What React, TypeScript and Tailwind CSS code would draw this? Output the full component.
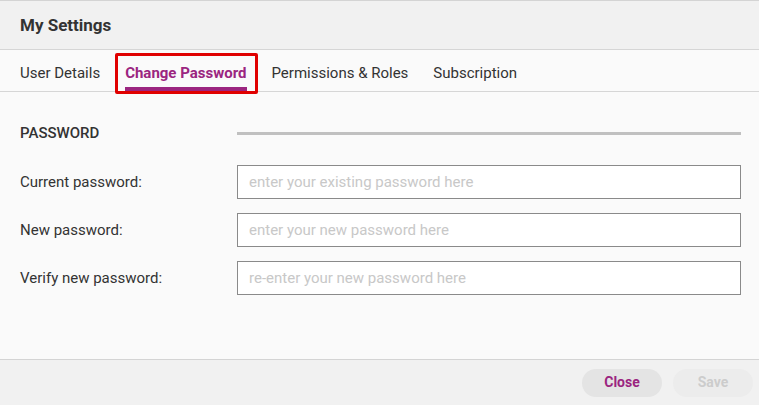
import React from "react";

const tabs = ["User Details", "Change Password", "Permissions & Roles", "Subscription"];

const fields = [
    { label: "Current password:", placeholder: "enter your existing password here" },
    { label: "New password:", placeholder: "enter your new password here" },
    { label: "Verify new password:", placeholder: "re-enter your new password here" },
];

export default function App() {
    return (
        <div className="w-[759px] h-[405px] flex flex-col bg-[#fafafa] text-[#333] border-t border-[#d4d4d4] font-['Roboto',sans-serif] overflow-hidden">
            <div className="h-[49px] shrink-0 bg-[#f1f1f1] border-b border-[#d6d6d6] flex items-center px-5 pt-[1px]">
                <h1 className="text-[17px] font-bold text-[#333]">My Settings</h1>
            </div>

            <div className="h-[42px] shrink-0 border-b border-[#d6d6d6] flex items-end px-5 gap-[25px]">
                {tabs.map((tab) => {
                    const active = tab === "Change Password";
                    return (
                        <div key={tab} className="relative h-full flex items-center pt-[6px]">
                            <span className={active ? "text-[15px] font-bold text-[#9b2580]" : "text-[15px] text-[#333]"}>
                                {tab}
                            </span>
                            {active && (
                                <>
                                    <div className="absolute left-0 right-0 bottom-0 h-[4px] bg-[#9b2580]" />
                                    <div className="absolute left-[-10px] right-[-11px] top-[3px] bottom-[-3px] border-[3px] border-[#e00000] rounded-[2px]" />
                                </>
                            )}
                        </div>
                    );
                })}
            </div>

            <div className="flex-1 pl-5 pr-[18px] pt-[30px]">
                <div className="flex items-center h-[22px]">
                    <div className="w-[217px] shrink-0 text-[15px] font-medium text-[#333]">PASSWORD</div>
                    <div className="w-[504px] shrink-0 h-[3px] bg-[#c0c0c0]" />
                </div>
                <div className="flex flex-col gap-[14px] mt-[21px]">
                    {fields.map((f) => (
                        <div key={f.label} className="flex items-center">
                            <label className="w-[217px] shrink-0 text-[15px] text-[#333]">{f.label}</label>
                            <input
                                type="password"
                                placeholder={f.placeholder}
                                className="w-[504px] shrink-0 h-[34px] border border-[#8a8a8a] bg-white px-[11px] text-[15px] placeholder:text-[#c8c8c8] outline-none"
                            />
                        </div>
                    ))}
                </div>
            </div>

            <div className="h-[46px] shrink-0 bg-[#f1f1f1] border-t border-[#d4d4d4] flex items-center justify-end gap-[11px] pr-[6px]">
                <button className="w-[80px] h-[28px] rounded-full bg-[#e4e4e4] text-[14px] font-bold text-[#9b2580]">Close</button>
                <button className="w-[80px] h-[28px] rounded-full bg-[#ececec] text-[14px] font-bold text-[#cccccc]">Save</button>
            </div>
        </div>
    );
}
